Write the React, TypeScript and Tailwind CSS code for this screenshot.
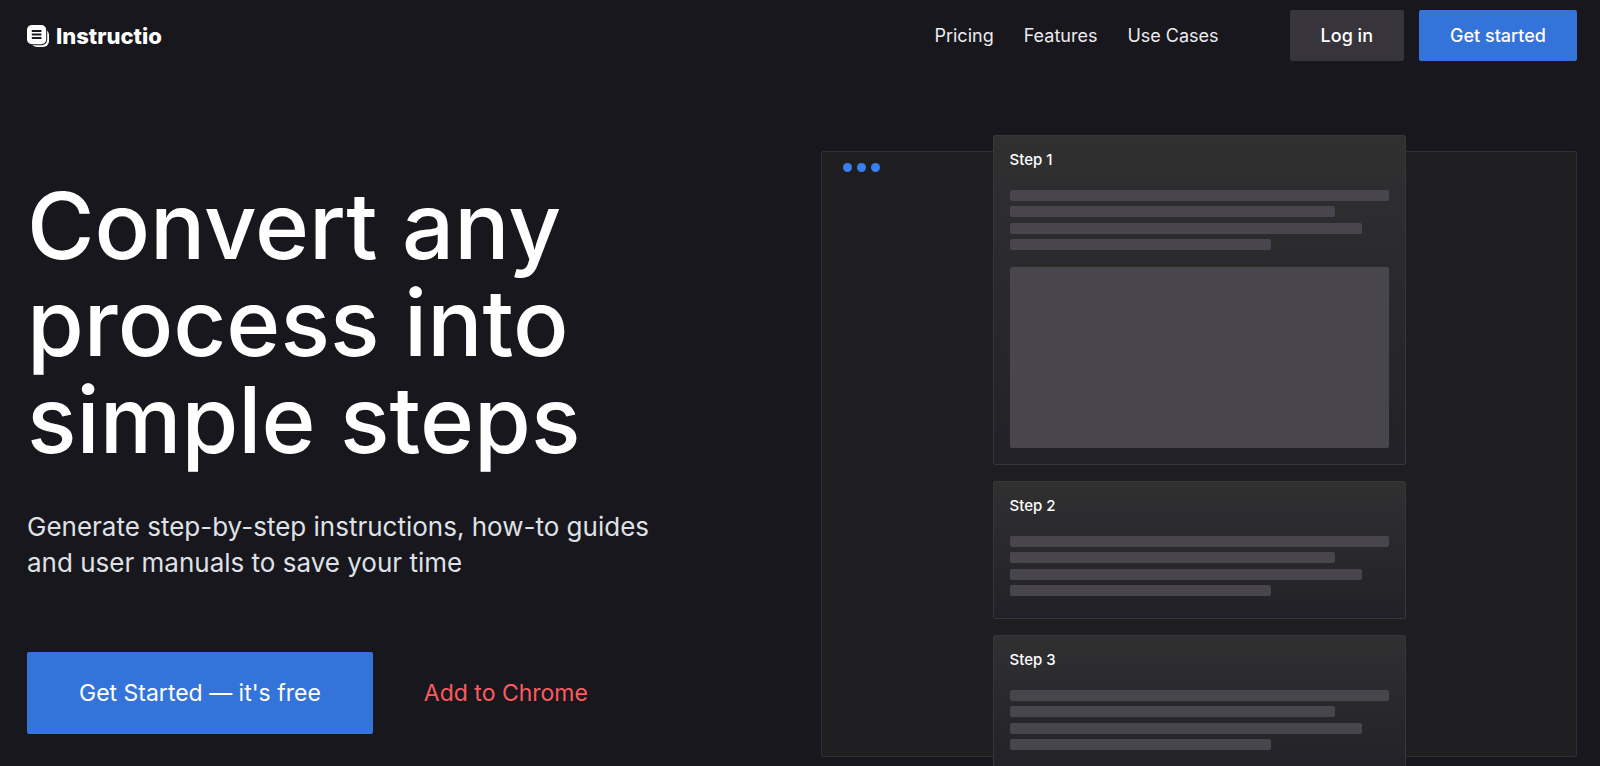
import clsx from 'clsx'

const navLinks = ['Pricing', 'Features', 'Use Cases']

const lineWidths = ['w-full', 'w-[86%]', 'w-[93%]', 'w-[69%]']

const steps = [
  { title: 'Step 1', hasImage: true },
  { title: 'Step 2', hasImage: false },
  { title: 'Step 3', hasImage: false },
]

function Logo() {
  return (
    <a href="#" className="flex items-center gap-[7px] text-white">
      <svg className="h-[22px] w-[22px]" viewBox="0 0 22 22" fill="none">
        <rect x="4" y="4" width="18" height="18" rx="6" fill="currentColor" />
        <rect x="-1" y="-1" width="21.2" height="21.2" rx="5.6" fill="#18171d" />
        <rect width="19.2" height="19.2" rx="4.8" fill="currentColor" />
        <path d="M4.8 6h9.6M4.8 9.5h9.6M4.8 13h9.6" stroke="#18171d" strokeWidth="1.8" />
      </svg>
      <span className="text-[22px] leading-7 font-extrabold">Instructio</span>
    </a>
  )
}

function StepCard({ title, hasImage }: { title: string; hasImage: boolean }) {
  return (
    <div
      className={clsx(
        'w-[413px] max-w-full rounded-xs border border-[#37363c] bg-gradient-to-b from-[#303031] to-[#222127] px-4 pt-3',
        hasImage ? 'pb-4' : 'pb-[22px]'
      )}
    >
      <h3 className="text-[15px] leading-6 font-medium text-white">{title}</h3>
      <div className="mt-[18px] flex h-[60px] flex-col justify-between">
        {lineWidths.map((width) => (
          <div key={width} className={clsx('h-[11px] rounded-xs bg-[#48464c]', width)} />
        ))}
      </div>
      {hasImage && <div className="mt-[17px] h-[181px] rounded-xs bg-[#48464c]" />}
    </div>
  )
}

export default function App() {
  return (
    <div className="min-h-screen bg-[#18171d] font-[Inter,sans-serif] text-white">
      {/* Header */}
      <header className="flex items-center justify-between pt-[10px] pr-[23px] pl-[27px]">
        <Logo />
        <div className="flex items-center gap-[71px]">
          <nav className="flex items-center gap-[30px]">
            {navLinks.map((label) => (
              <a key={label} href="#" className="text-lg text-[#ececee] hover:text-white">
                {label}
              </a>
            ))}
          </nav>
          <div className="flex items-center gap-[15px]">
            <button className="h-[51px] rounded-xs bg-[#37353b] px-[31px] text-lg font-medium">Log in</button>
            <button className="h-[51px] rounded-xs bg-[#3474da] px-[31px] text-lg font-medium">Get started</button>
          </div>
        </div>
      </header>

      {/* Hero */}
      <section className="grid grid-cols-[794fr_756fr] overflow-hidden pt-[90px] pr-[23px] pb-[9px] pl-[27px]">
        <div className="pt-[26px]">
          <h1 className="max-w-[600px] text-[92px] leading-[97px] font-medium">Convert any process into simple steps</h1>
          <p className="mt-[41px] max-w-[660px] text-[26px] leading-9 text-[#dfe1e6]">
            Generate step-by-step instructions, how-to guides and user manuals to save your time
          </p>
          <div className="mt-[71px] flex items-center gap-[51px]">
            <button className="h-[82px] rounded-xs bg-[#3474da] px-[52px] text-[23px]">Get Started — it's free</button>
            <a href="#" className="text-[23px] text-[#fc5b5f]">
              Add to Chrome
            </a>
          </div>
        </div>

        {/* Browser mockup, the steps hang over its top and bottom edge */}
        <div className="relative rounded-xs border border-[#2f2e34] bg-[#1e1e20]">
          <div className="absolute top-[11px] left-[21px] flex gap-[5px]">
            <span className="size-[9px] rounded-full bg-[#3a7ff0]" />
            <span className="size-[9px] rounded-full bg-[#3a7ff0]" />
            <span className="size-[9px] rounded-full bg-[#3a7ff0]" />
          </div>
          <div className="relative -my-[17px] flex flex-col items-center gap-4">
            {steps.map((step) => (
              <StepCard key={step.title} {...step} />
            ))}
          </div>
        </div>
      </section>
    </div>
  )
}
